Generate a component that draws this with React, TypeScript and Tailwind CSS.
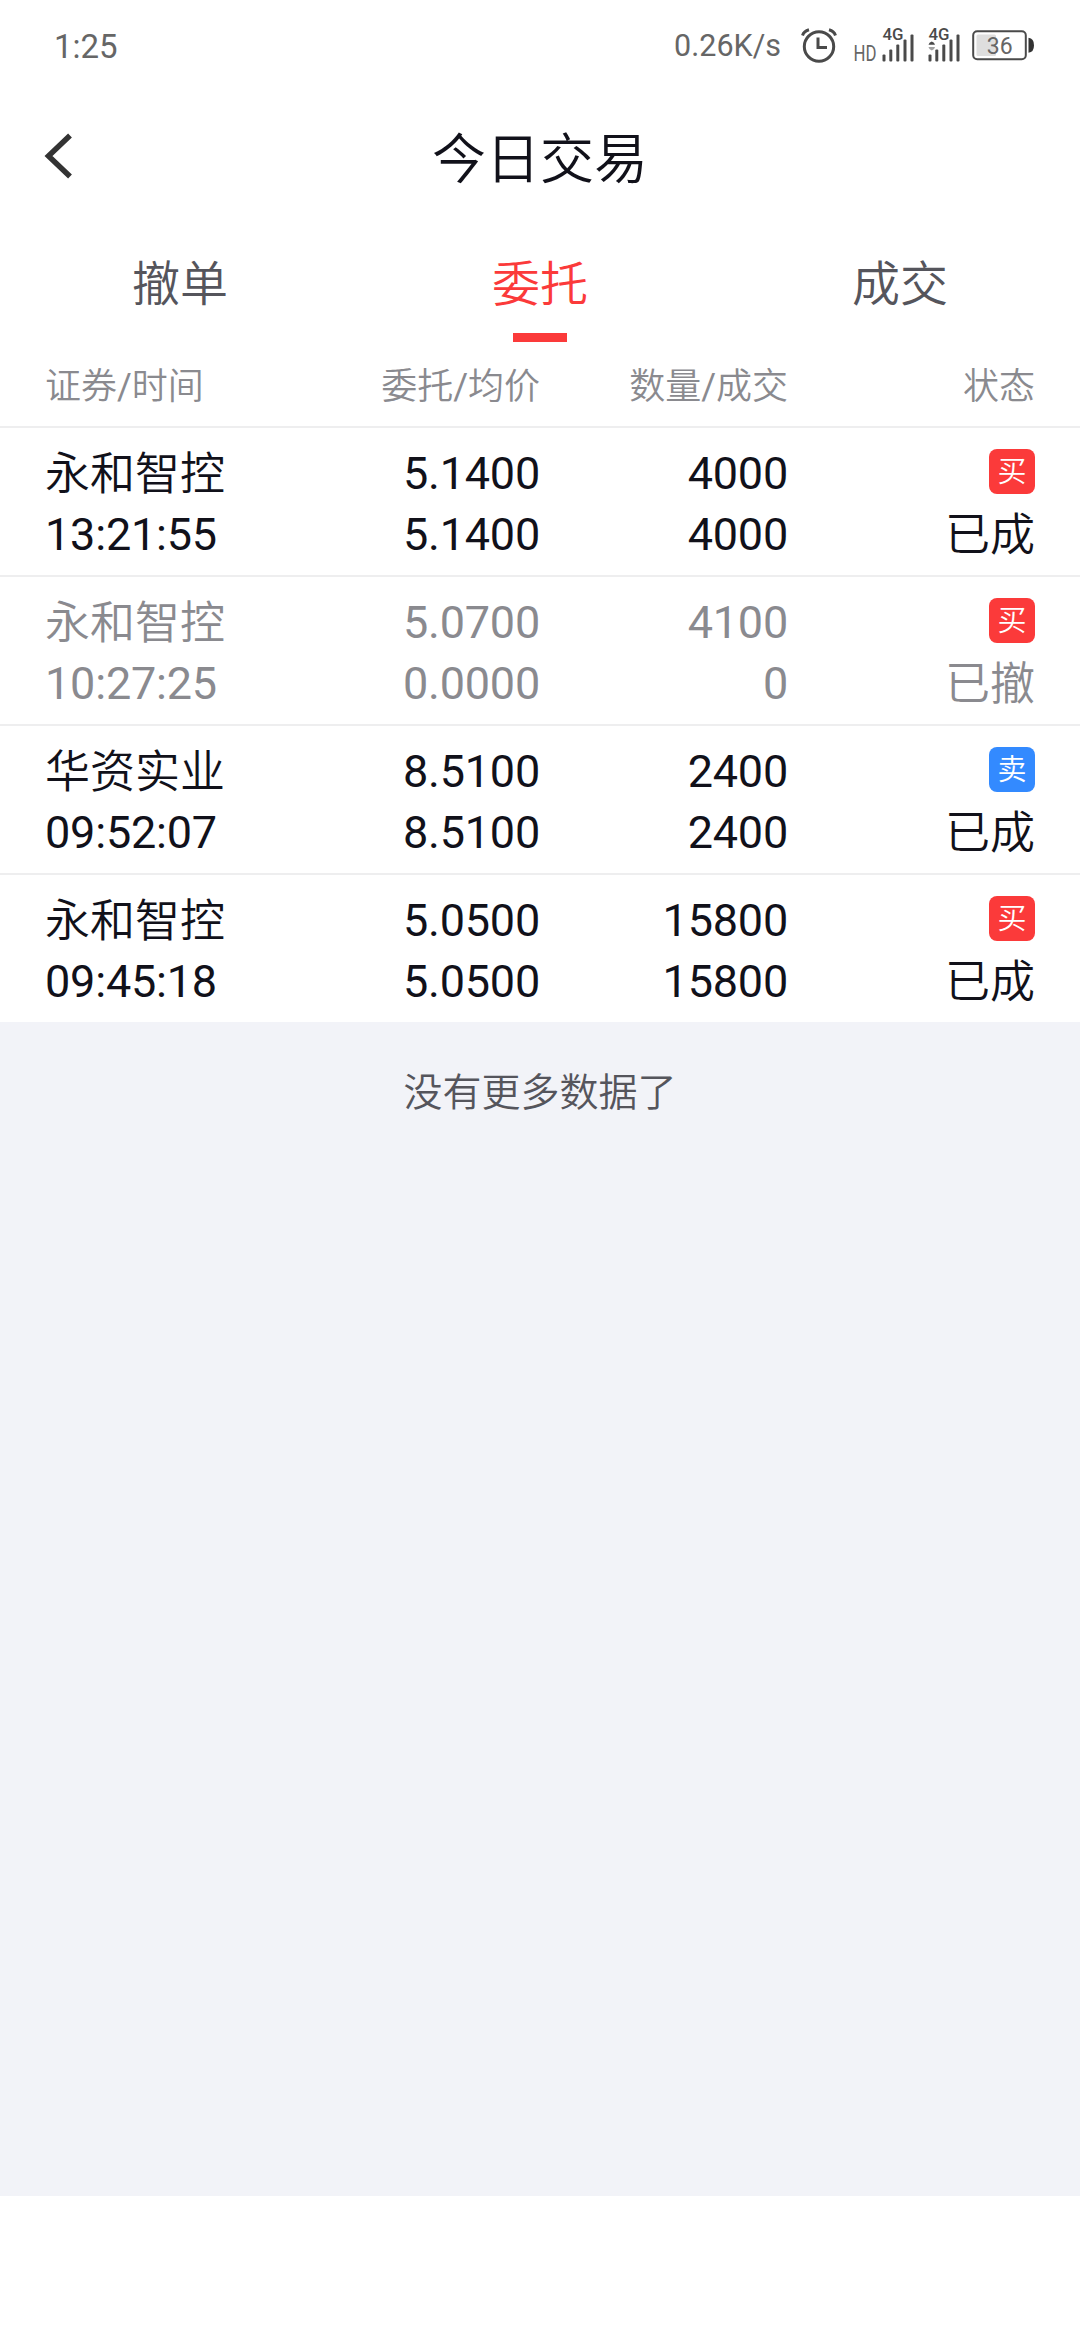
const tabs = [
  { label: "撤单", active: false },
  { label: "委托", active: true },
  { label: "成交", active: false },
];

const orders = [
  { name: "永和智控", time: "13:21:55", price: "5.1400", avg: "5.1400", qty: "4000", filled: "4000", side: "买", status: "已成" },
  { name: "永和智控", time: "10:27:25", price: "5.0700", avg: "0.0000", qty: "4100", filled: "0", side: "买", status: "已撤" },
  { name: "华资实业", time: "09:52:07", price: "8.5100", avg: "8.5100", qty: "2400", filled: "2400", side: "卖", status: "已成" },
  { name: "永和智控", time: "09:45:18", price: "5.0500", avg: "5.0500", qty: "15800", filled: "15800", side: "买", status: "已成" },
];

const AlarmIcon = () => (
  <svg className="ml-[20px] h-[36px] w-[36px]" viewBox="0 0 36 36" fill="none" stroke="#4a4a4a">
    <circle cx="18" cy="18.5" r="14.7" strokeWidth="3" />
    <path d="M17 9.5V19.5H26" strokeWidth="3" />
    <path d="M1.5 7.5Q3 3.2 8 1.8M34.5 7.5Q33 3.2 28 1.8" strokeWidth="3" />
  </svg>
);

const Signal = ({ arrows = false }: { arrows?: boolean }) => (
  <svg className="h-[52px] w-[33px]" viewBox="0 -8 33 52" fill="#4a4a4a">
    <text x="0.5" y="11.7" fontSize="16.5" fontWeight="500" textLength="21" lengthAdjust="spacingAndGlyphs">
      4G
    </text>
    <rect x="0.5" y="26.5" width="3" height="7" rx="1" />
    <rect x="7.3" y="21.5" width="3" height="12" rx="1" />
    <rect x="14.3" y="16.5" width="3" height="17" rx="1" />
    <rect x="21.5" y="11.5" width="3" height="22" rx="1" />
    <rect x="28.5" y="6.5" width="3" height="27" rx="1" />
    {arrows && (
      <>
        <path d="M0.5 16.8Q1 14.3 3.8 13.5Q6.5 14.3 7 16.8Z" />
        <path d="M0.5 19H7Q6.5 21.8 3.8 22.6Q1 21.8 0.5 19Z" fill="#a3a3a3" />
      </>
    )}
  </svg>
);

const Battery = () => (
  <svg className="ml-[11px] h-[32px] w-[63px]" viewBox="0 0 63 32">
    <rect x="1.2" y="1.2" width="52.6" height="28" rx="4" fill="none" stroke="#4a4a4a" strokeWidth="2" />
    <rect x="4.5" y="4.5" width="19.5" height="21.5" rx="1.5" fill="#dedede" />
    <path d="M56.5 7.8Q62 8.3 62 15.3T56.5 22.8Z" fill="#333" />
    <text x="27.8" y="23.8" fontSize="23" textAnchor="middle" fill="#666">
      36
    </text>
  </svg>
);

const StatusBar = () => (
  <div className="flex h-[92px] items-center pl-[54px] pr-[45px] text-[#666]">
    <span className="pt-px text-[33px] leading-none">1:25</span>
    <span className="ml-auto pt-px text-[30.5px] leading-none">0.26K/s</span>
    <AlarmIcon />
    <svg className="ml-[16px] h-[52px] w-[28px]" viewBox="0 -8 28 52" fill="#666">
      <text x="0.5" y="33" fontSize="22" textLength="23" lengthAdjust="spacingAndGlyphs">
        HD
      </text>
    </svg>
    <div className="ml-px">
      <Signal />
    </div>
    <div className="ml-[13px]">
      <Signal arrows />
    </div>
    <Battery />
  </div>
);

const Header = () => (
  <header className="grid h-[134px] grid-cols-[1fr_auto_1fr] items-center px-[44px]">
    <svg className="mb-[6px] h-[46px] w-[30px]" viewBox="0 0 30 46" fill="none" stroke="#333" strokeWidth="5.5">
      <path d="M26 2.5L4.5 23L26 43.5" />
    </svg>
    <h1 className="mt-[3px] text-[54px] leading-[64px] text-[#11111a]">今日交易</h1>
  </header>
);

const Tabs = () => (
  <nav className="grid h-[117px] grid-cols-3">
    {tabs.map((tab) => (
      <div key={tab.label} className="flex flex-col items-center pt-[29px]">
        <span className={tab.active ? "h-[60px] text-[48px] leading-[60px] text-[#fb3a3a]" : "h-[60px] text-[48px] leading-[60px] text-[#55555c]"}>
          {tab.label}
        </span>
        {tab.active && <div className="mt-[18px] h-[9px] w-[54px] bg-[#fb3a3a]" />}
      </div>
    ))}
  </nav>
);

const columns = "grid grid-cols-[248px_247px_248px_247px] px-[45px]";

const App = () => {
  return (
    <div className="flex h-[2340px] w-[1080px] flex-col bg-white font-[Roboto,'Noto_Sans_CJK_SC_DemiLight','Noto_Sans_CJK_SC_Light','Noto_Sans_CJK_SC',sans-serif] text-[#11111a]">
      <StatusBar />
      <Header />
      <Tabs />

      <div className={`${columns} h-[85px] border-b-2 border-[#eeeeef] pt-[22px] text-right text-[36px] leading-[45px] text-[#8a8a8f]`}>
        <span className="text-left">证券/时间</span>
        <span>委托/均价</span>
        <span>数量/成交</span>
        <span>状态</span>
      </div>

      <div className="h-[594px]">
        {orders.map((order) => (
          <div
            key={order.time}
            className={`${columns} h-[149px] grid-rows-[61px_61px] border-b-2 border-[#eeeeef] pt-[15px] text-right text-[45px] leading-[61px] last:h-[147px] last:border-b-0 ${order.status === "已撤" ? "text-[#8a8a8f]" : ""}`}
          >
            <span className="pt-px text-left">{order.name}</span>
            <span className="tracking-[-0.2px]">{order.price}</span>
            <span className="tracking-[-0.2px]">{order.qty}</span>
            <span
              className={`mt-[6px] flex h-[45px] w-[46px] items-center justify-center justify-self-end rounded-[8px] pt-px text-[29px] leading-none text-white ${order.side === "买" ? "bg-[#fb3a3a]" : "bg-[#338aff]"}`}
            >
              {order.side}
            </span>
            <span className="text-left tracking-[-0.2px]">{order.time}</span>
            <span className="tracking-[-0.2px]">{order.avg}</span>
            <span className="tracking-[-0.2px]">{order.filled}</span>
            <span className="pt-px">{order.status}</span>
          </div>
        ))}
      </div>

      <div className="h-[1174px] bg-[#f2f3f8] pt-[46px] text-center text-[39px] leading-[50px] text-[#55555c]">
        没有更多数据了
      </div>
    </div>
  );
};

export default App;
